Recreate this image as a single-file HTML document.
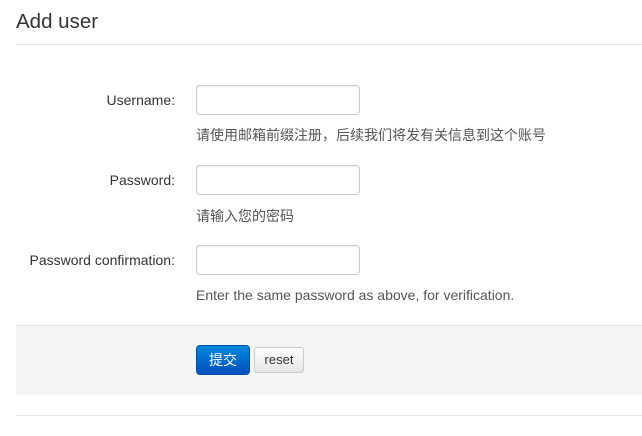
<!DOCTYPE html>
<html><head><meta charset="utf-8"><style>
body{margin:0;width:642px;height:436px;background:#fff;font-family:"Liberation Sans","Noto Sans CJK SC",sans-serif;color:#333;position:relative;overflow:hidden}
.a{position:absolute}
h1{position:absolute;left:16px;top:10px;margin:0;font-size:20.5px;font-weight:normal;color:#333}
.hr{position:absolute;left:16px;right:0;height:1px;background:#e5e5e5}
.lbl{position:absolute;right:467px;font-size:14px;color:#333;text-align:right;white-space:nowrap}
.inp{position:absolute;left:196px;width:164px;height:30px;border:1px solid #ccc;border-radius:4px;box-sizing:border-box;box-shadow:inset 0 1px 1px rgba(0,0,0,.075)}
.help{position:absolute;left:196px;font-size:14px;color:#555;white-space:nowrap}
</style></head><body>
<h1>Add user</h1>
<div class="hr" style="top:44px"></div>
<div class="lbl" style="top:92px">Username:</div>
<div class="inp" style="top:85px"></div>
<div class="help" style="top:125px">请使用邮箱前缀注册，后续我们将发有关信息到这个账号</div>
<div class="lbl" style="top:172px">Password:</div>
<div class="inp" style="top:165px"></div>
<div class="help" style="top:206px">请输入您的密码</div>
<div class="lbl" style="top:252px">Password confirmation:</div>
<div class="inp" style="top:245px"></div>
<div class="help" style="top:287px">Enter the same password as above, for verification.</div>
<div class="a" style="left:16px;right:0;top:325px;height:69px;background:#f5f5f5;border-top:1px solid #e5e5e5"></div>
<div class="a" style="left:196px;top:345px;width:54px;height:30px;border-radius:4px;background:linear-gradient(#0088dd,#0050bb);border:1px solid #0050a0;box-sizing:border-box;color:#fff;font-size:14px;text-align:center;line-height:28px">提交</div>
<div class="a" style="left:254px;top:347px;width:50px;height:26px;border-radius:3px;background:linear-gradient(#fff,#e6e6e6);border:1px solid #ccc;box-sizing:border-box;color:#333;font-size:13px;text-align:center;line-height:24px">reset</div>
<div class="hr" style="top:415px"></div>
</body></html>
